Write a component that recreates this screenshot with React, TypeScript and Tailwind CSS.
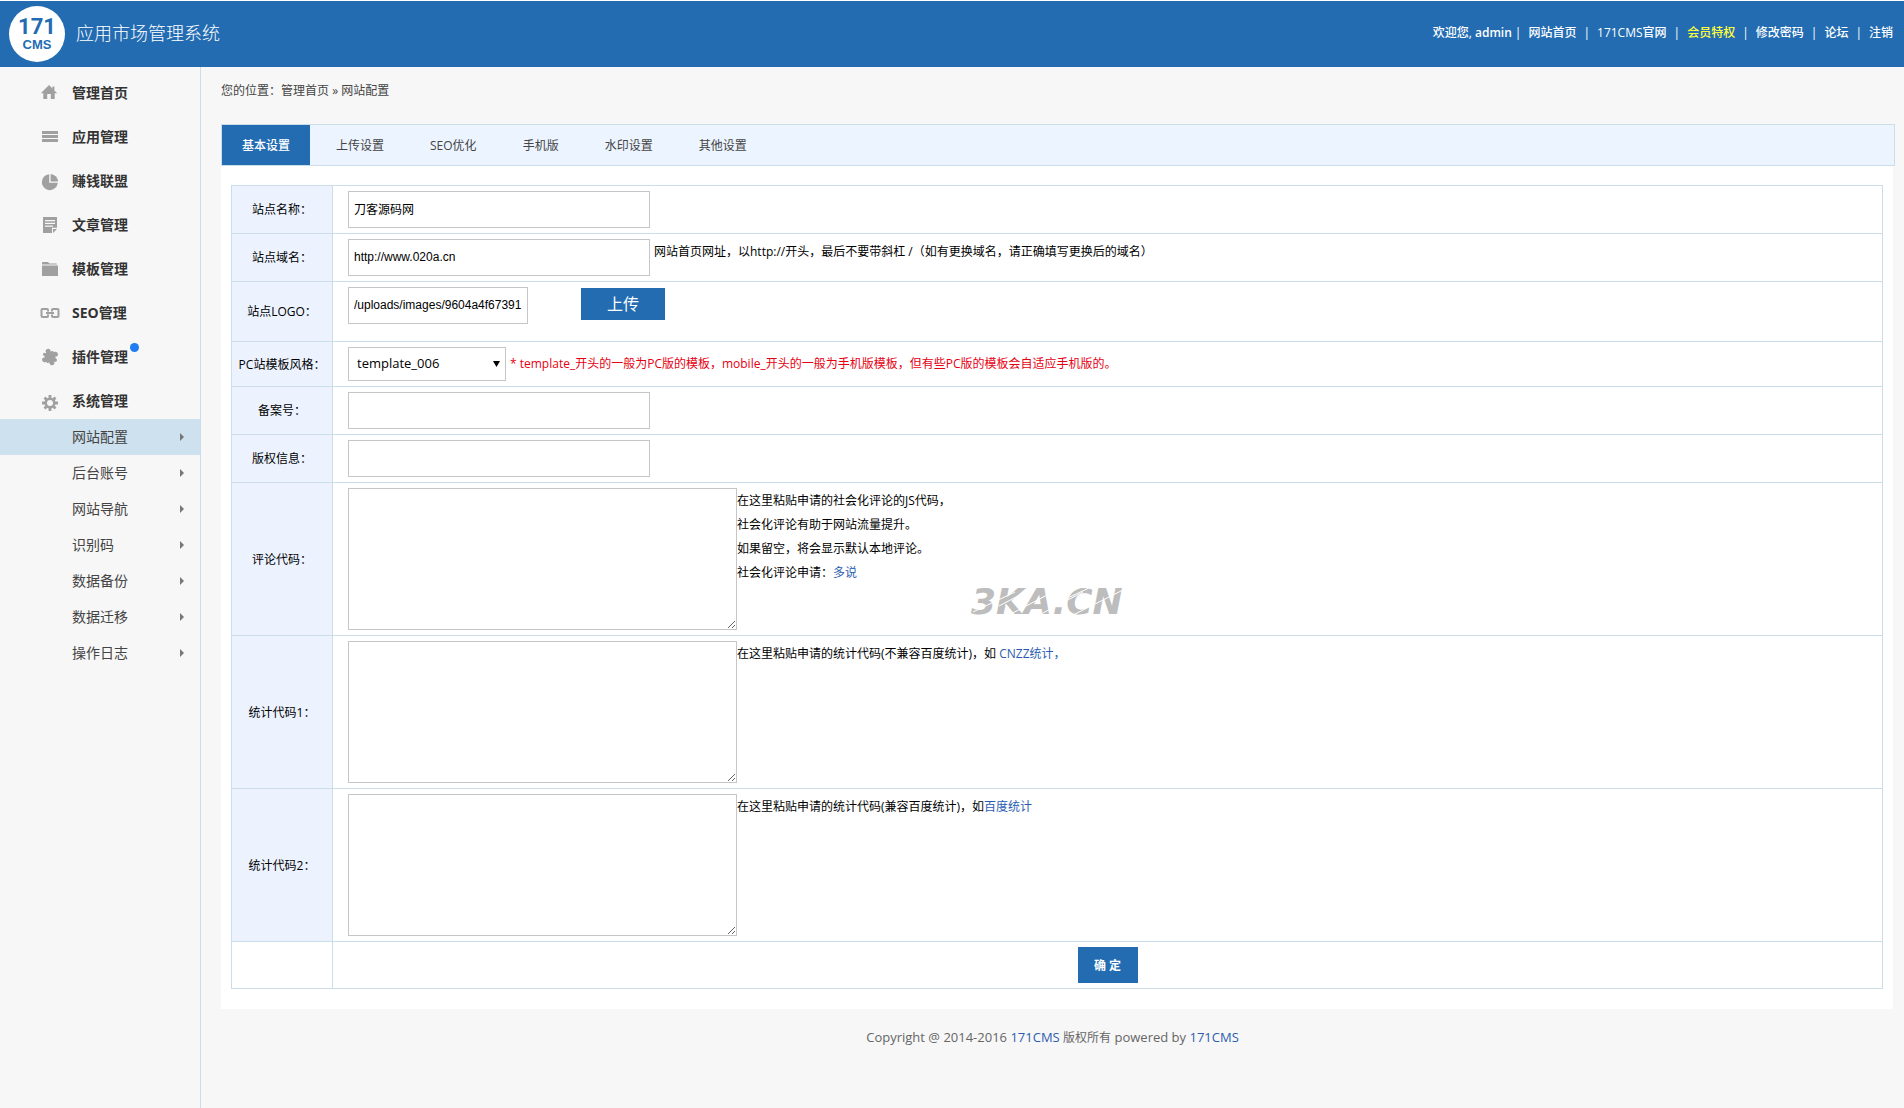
import * as React from "react";
import { clsx } from "clsx";

const topLinks = [
  { label: "网站首页" },
  { label: "171CMS官网" },
  { label: "会员特权", highlight: true },
  { label: "修改密码" },
  { label: "论坛" },
  { label: "注销" },
];

const HomeIcon = () => (
  <path d="M9 2 .8 10.200h2.500V16h3.900v-5h3.600v5h3.900v-5.800h2.500L14.400 7.400V3.400h-2v2z" />
);

const ListIcon = () => <path d="M2 4h16v3H2zM2 8h16v3H2zM2 12h16v3H2z" />;

const PieIcon = () => (
  <>
    <path d="M9.200 3.200a8 8 0 1 0 8.600 8.600H9.200z" />
    <path d="M10.600 3v7.400H18a7.800 7.800 0 0 0-7.400-7.400z" />
  </>
);

const ArticleIcon = () => (
  <path
    fillRule="evenodd"
    d="M3 2h14v10.800h-5V18H3zM5 5v1.200h10V5zM5 7.800V9h10V7.800zM5 10.600v1.200h8v-1.200zM13 14h4l-4 4z"
  />
);

const FolderIcon = () => (
  <path d="M3 3h5l1.500 1.400H16q1 0 1 1H2V4a1 1 0 0 1 1-1zM2 6.400h16V17H2z" />
);

const LinkIcon = () => (
  <path
    fill="none"
    stroke="currentColor"
    strokeWidth="2"
    d="M8 8.500V7q0-1-1-1H2.500q-1 0-1 1v6q0 1 1 1H7q1 0 1-1v-1.500M12 8.500V7q0-1 1-1h4.500q1 0 1 1v6q0 1-1 1H13q-1 0-1-1v-1.500M6 10h8"
  />
);

const PluginIcon = () => (
  <g transform="rotate(-18 10 10)">
    <rect x="5" y="5" width="10" height="10" rx="1" />
    <circle cx="10" cy="4" r="2.500" />
    <circle cx="16" cy="9" r="2.500" />
    <circle cx="10" cy="16" r="2.500" />
    <circle cx="4" cy="11" r="2.500" />
    <circle cx="14" cy="14.500" r="1.800" />
    <circle cx="5.500" cy="5.800" r="1.500" />
  </g>
);

const GearIcon = () => (
  <>
    <circle cx="10" cy="12" r="4.300" fill="none" stroke="currentColor" strokeWidth="2.600" />
    <path
      fill="none"
      stroke="currentColor"
      strokeWidth="2.800"
      d="M10 4v3M10 17v3M2 12h3M15 12h3M4.500 6.500l2 2M13.500 15.500l2 2M4.500 17.500l2-2M13.500 8.500l2-2"
    />
  </>
);

const menu = [
  { label: "管理首页", Icon: HomeIcon },
  { label: "应用管理", Icon: ListIcon },
  { label: "赚钱联盟", Icon: PieIcon },
  { label: "文章管理", Icon: ArticleIcon },
  { label: "模板管理", Icon: FolderIcon },
  { label: "SEO管理", Icon: LinkIcon },
  { label: "插件管理", Icon: PluginIcon, dot: true },
  { label: "系统管理", Icon: GearIcon },
];

const subMenu = ["网站配置", "后台账号", "网站导航", "识别码", "数据备份", "数据迁移", "操作日志"];

const tabs = ["基本设置", "上传设置", "SEO优化", "手机版", "水印设置", "其他设置"];

const inputClass =
  "h-[37px] border border-[#c6c6c6] bg-white px-[5px] pb-[2px] font-['Liberation_Sans','Noto_Sans_CJK_SC',sans-serif] text-xs text-black";

const Header = () => (
  <header className="flex h-[67px] items-center justify-between border-t border-white bg-[#236cb2] pr-[11px] pl-[9px] text-white">
    <div className="flex items-center gap-[11px]">
      <div className="flex size-14 flex-col items-center justify-center rounded-full bg-white text-[#236cb2]">
        <span className="font-['Liberation_Sans_Narrow','Roboto',sans-serif] text-[22px] leading-[22px] font-bold">171</span>
        <span className="font-['Liberation_Sans',sans-serif] text-[13px] leading-[14px] font-bold">CMS</span>
      </div>
      <h1 className="pb-[2px] text-lg font-light">应用市场管理系统</h1>
    </div>
    <nav className="flex items-center pb-[3px] text-xs font-medium">
      <span>
        欢迎您, <span className="font-semibold">admin</span>
      </span>
      {topLinks.map(({ label, highlight }, i) => (
        <React.Fragment key={label}>
          <span className={i === 0 ? "mr-[7px] ml-[3px]" : "mx-[7px]"}>|</span>
          <a href="#" className={clsx(highlight && "text-[#ffff3c]")}>
            {label}
          </a>
        </React.Fragment>
      ))}
    </nav>
  </header>
);

const Sidebar = () => (
  <aside className="w-[201px] shrink-0 border-r border-[#cbdde9] text-sm">
    {menu.map(({ label, Icon, dot }) => (
      <a key={label} href="#" className="flex h-11 items-center gap-3 pt-2 pl-10 font-bold text-[#333]">
        <svg viewBox="0 0 20 20" className="size-5 text-[#a0a0a0]" fill="currentColor">
          <Icon />
        </svg>
        <span className="relative">
          {label}
          {dot && <i className="absolute -top-1 -right-[11px] size-[9px] rounded-full bg-[#1e7df0]" />}
        </span>
      </a>
    ))}
    {subMenu.map((label, i) => (
      <a
        key={label}
        href="#"
        className={clsx("flex h-9 items-center justify-between pr-4 pl-[72px] text-[#444]", i === 0 && "bg-[#cde1ee]")}
      >
        {label}
        <svg viewBox="0 0 4 8" className="h-2 w-1" fill="#777">
          <path d="M0 0 4 4 0 8z" />
        </svg>
      </a>
    ))}
  </aside>
);

interface RowProps {
  label: string;
  id: string;
  className?: string;
  center?: boolean;
  children: React.ReactNode;
}

const Row = ({ label, id, className, center, children }: RowProps) => (
  <tr className={className}>
    <th className="w-[101px] border border-[#cbdde9] bg-[#ecf3ff] pt-px text-center font-normal">
      <label htmlFor={id}>{label}</label>
    </th>
    <td className="border border-[#cbdde9] py-[5px] pl-[15px] align-top">
      <div className={clsx("flex", center ? "items-center" : "items-start")}>{children}</div>
    </td>
  </tr>
);

const Area = ({ id }: { id: string }) => (
  <textarea id={id} className="h-[142px] w-[389px] resize border border-[#c6c6c6] bg-white" />
);

const Link = ({ children }: { children: React.ReactNode }) => (
  <a href="#" className="text-[#2a5db0]">
    {children}
  </a>
);

const Watermark = () => (
  <div className="absolute top-[94px] left-[234px] font-['DejaVu_Sans',sans-serif] text-[36px] leading-10 font-bold text-[#bdbdbd] italic">
    3KA.CN
    <svg viewBox="0 0 160 40" className="absolute top-0 left-0 h-10 w-40" fill="none" stroke="#fff" strokeWidth="1">
      <path d="M2 30 44 10M36 34 78 12M70 32 112 10M100 34 156 6M28 24 60 7M84 22 120 5" />
    </svg>
  </div>
);

const SettingsForm = () => (
  <form onSubmit={(e) => e.preventDefault()}>
    <table className="w-full border-collapse">
      <tbody>
        <Row label="站点名称：" id="site-name">
          <input id="site-name" className={clsx(inputClass, "w-[302px]")} defaultValue="刀客源码网" />
        </Row>
        <Row label="站点域名：" id="site-domain">
          <input id="site-domain" className={clsx(inputClass, "w-[302px]")} defaultValue="http://www.020a.cn" />
          <p className="pt-px pl-1 leading-6">
            网站首页网址，以http://开头，最后不要带斜杠 /（如有更换域名，请正确填写更换后的域名）
          </p>
        </Row>
        <Row label="站点LOGO：" id="site-logo" className="h-[60px]">
          <input id="site-logo" className={clsx(inputClass, "w-[180px]")} defaultValue="/uploads/images/9604a4f67391" />
          <button type="button" className="mt-px ml-[53px] h-8 w-[84px] bg-[#236cb2] text-base text-white">
            上传
          </button>
        </Row>
        <Row label="PC站模板风格：" id="template" center>
          <div className="relative">
            <select
              id="template"
              className="block h-[34px] w-[158px] appearance-none border border-[#c6c6c6] bg-white px-2 text-[13px] text-black"
            >
              <option>template_006</option>
            </select>
            <svg viewBox="0 0 7 6" className="pointer-events-none absolute top-[14px] right-[6px] h-[6px] w-[7px]">
              <path d="M0 0h7L3.500 6z" />
            </svg>
          </div>
          <p className="pl-1 leading-6 text-[#e60012]">
            * template_开头的一般为PC版的模板，mobile_开头的一般为手机版模板，但有些PC版的模板会自适应手机版的。
          </p>
        </Row>
        <Row label="备案号：" id="icp">
          <input id="icp" className={clsx(inputClass, "w-[302px]")} />
        </Row>
        <Row label="版权信息：" id="copyright">
          <input id="copyright" className={clsx(inputClass, "w-[302px]")} />
        </Row>
        <Row label="评论代码：" id="comment-code">
          <Area id="comment-code" />
          <div className="relative pt-px leading-6">
            <p>在这里粘贴申请的社会化评论的JS代码，</p>
            <p>社会化评论有助于网站流量提升。</p>
            <p>如果留空，将会显示默认本地评论。</p>
            <p>
              社会化评论申请：<Link>多说</Link>
            </p>
            <Watermark />
          </div>
        </Row>
        <Row label="统计代码1：" id="stats-code-1">
          <Area id="stats-code-1" />
          <p className="pt-px leading-6">
            在这里粘贴申请的统计代码(不兼容百度统计)，如 <Link>CNZZ统计，</Link>
          </p>
        </Row>
        <Row label="统计代码2：" id="stats-code-2">
          <Area id="stats-code-2" />
          <p className="pt-px leading-6">
            在这里粘贴申请的统计代码(兼容百度统计)，如<Link>百度统计</Link>
          </p>
        </Row>
        <tr>
          <td className="border border-[#cbdde9]" />
          <td className="border border-[#cbdde9] py-[5px]">
            <button type="submit" className="mx-auto block h-9 w-[60px] bg-[#236cb2] pt-[2px] font-bold text-white">
              确 定
            </button>
          </td>
        </tr>
      </tbody>
    </table>
  </form>
);

export default function App() {
  return (
    <div className="flex min-h-screen flex-col bg-[#f7f7f7] font-['Open_Sans','Noto_Sans_CJK_SC',sans-serif] text-xs text-black">
      <Header />
      <div className="flex flex-1">
        <Sidebar />
        <main className="min-w-0 flex-1">
          <div className="pr-[9px] pl-5">
            <p className="pt-3 pb-[21px] leading-6 text-[#444]">
              您的位置：<a href="#">管理首页</a> » <a href="#">网站配置</a>
            </p>
            <div className="flex gap-[6px] border border-[#cbdde9] bg-[#ecf4ff]">
              {tabs.map((tab, i) => (
                <button
                  key={tab}
                  type="button"
                  className={clsx("h-10 px-5 pt-[2px]", i === 0 ? "bg-[#236cb2] font-medium text-white" : "text-[#444]")}
                >
                  {tab}
                </button>
              ))}
            </div>
            <div className="mr-[2px] bg-white px-[10px] pt-[19px] pb-5">
              <SettingsForm />
            </div>
          </div>
          <footer className="pt-4 text-center text-[13px] leading-6 text-[#666]">
            Copyright @ 2014-2016 <Link>171CMS</Link> <span className="text-xs">版权所有</span> powered by{" "}
            <Link>171CMS</Link>
          </footer>
        </main>
      </div>
    </div>
  );
}
